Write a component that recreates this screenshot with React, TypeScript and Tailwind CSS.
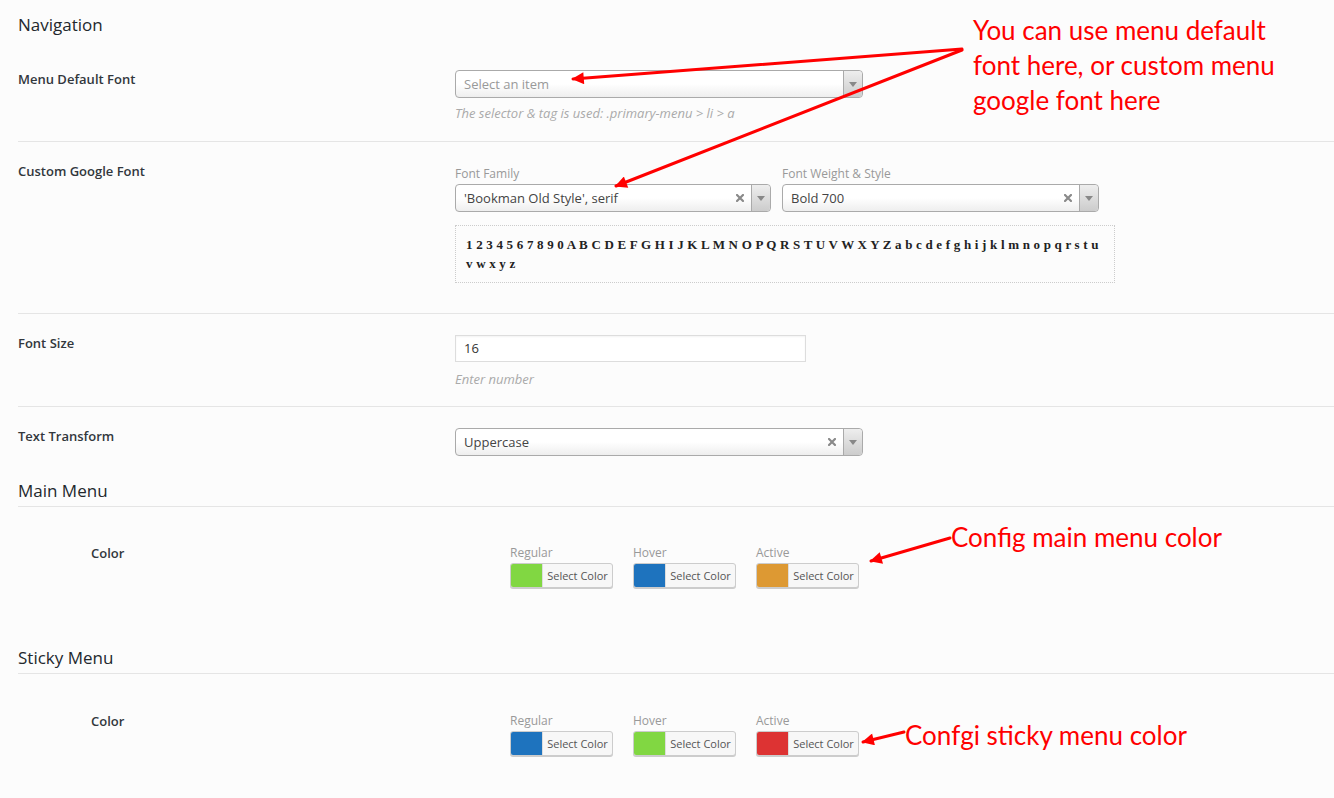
import React from "react";

const ui = "font-['Open_Sans',_'Noto_Sans',_sans-serif]";
const labelCls = "text-[13px] font-semibold leading-[18px] text-[#32373c]";
const helpCls = "text-[13px] italic leading-[16px] text-[#aaa]";
const smallLabel = "text-[12px] leading-[16px] text-[#999]";

function ClearIcon() {
  return (
    <svg width="8" height="8" viewBox="0 0 8 8" aria-hidden>
      <path d="M1 1 L7 7 M7 1 L1 7" stroke="#8a8a8a" strokeWidth="2.2" strokeLinecap="square" />
    </svg>
  );
}

type SelectProps = {
  value?: string;
  placeholder?: string;
  clearable?: boolean;
  className?: string;
};

function Select({ value, placeholder, clearable, className }: SelectProps) {
  return (
    <div
      className={`flex h-[28px] items-stretch rounded-[4px] border border-[#aaa] bg-linear-to-b from-white from-50% to-[#eee] ${className ?? ""}`}
    >
      <span
        className={`flex-1 truncate pl-[8px] text-[13px] leading-[26px] ${value ? "text-[#444]" : "text-[#999]"}`}
      >
        {value ?? placeholder}
      </span>
      {clearable ? (
        <span className="flex w-[22px] items-center justify-center">
          <ClearIcon />
        </span>
      ) : null}
      <span className="flex w-[19px] items-center justify-center rounded-r-[4px] border-l border-[#aaa] bg-linear-to-b from-[#eee] to-[#ccc]">
        <span className="h-0 w-0 border-x-[4px] border-t-[5px] border-x-transparent border-t-[#888]" />
      </span>
    </div>
  );
}

function ColorPick({ label, color }: { label: string; color: string }) {
  return (
    <div className="flex w-[103px] flex-col">
      <span className={`${smallLabel} mb-[2px]`}>{label}</span>
      <button
        type="button"
        className="flex h-[25px] w-[103px] items-stretch overflow-hidden rounded-[3px] border border-[#ccc] bg-[#f7f7f7] p-0 shadow-[0_1px_0_#ccc]"
      >
        <span className="w-[31px] shrink-0" style={{ backgroundColor: color }} />
        <span className="flex-1 border-l border-[#ddd] text-center text-[11px] leading-[23px] text-[#555]">
          Select Color
        </span>
      </button>
    </div>
  );
}

const preview =
  "1 2 3 4 5 6 7 8 9 0 A B C D E F G H I J K L M N O P Q R S T U V W X Y Z a b c d e f g h i j k l m n o p q r s t u v w x y z";

function Annotations() {
  const red = "#ff0000";
  const note = "absolute font-['Lato',_sans-serif] text-[26px] leading-[35px] text-[#ff0000]";
  return (
    <div className="pointer-events-none absolute inset-0">
      <svg className="absolute left-0 top-0" width="1334" height="798" aria-hidden>
        <defs>
          <marker id="ah" viewBox="0 0 10 10" refX="9" refY="5" markerWidth="5" markerHeight="4" orient="auto">
            <path d="M0 0 L10 5 L0 10 Z" fill={red} />
          </marker>
        </defs>
        <g stroke={red} strokeWidth="3" fill="none" strokeLinecap="round">
          <line x1="962" y1="49" x2="573" y2="79" markerEnd="url(#ah)" />
          <line x1="962" y1="50" x2="616" y2="186" markerEnd="url(#ah)" />
          <line x1="950" y1="538" x2="871" y2="561" markerEnd="url(#ah)" />
          <line x1="904" y1="732" x2="863" y2="742" markerEnd="url(#ah)" />
        </g>
      </svg>
      <div className={`${note} left-[973px] top-[13px]`}>
        <div>You can use menu default</div>
        <div>font here, or custom menu</div>
        <div>google font here</div>
      </div>
      <div className={`${note} left-[951px] top-[520px]`}>Config main menu color</div>
      <div className={`${note} left-[905px] top-[718px]`}>Confgi sticky menu color</div>
    </div>
  );
}

export default function App() {
  return (
    <div className={`relative min-h-screen w-[1334px] overflow-hidden bg-[#fcfcfc] pl-[18px] ${ui}`}>
      {/* Navigation */}
      <h2 className="pt-[13px] text-[17px] font-normal leading-[24px] text-[#23282d]">Navigation</h2>

      <div className="grid grid-cols-[437px_1fr] border-b border-[#e5e5e5] pt-[33px] pb-[20px]">
        <div className={labelCls}>Menu Default Font</div>
        <div>
          <Select placeholder="Select an item" className="w-[408px]" />
          <p className={`${helpCls} mt-[7px]`}>The selector &amp; tag is used: .primary-menu &gt; li &gt; a</p>
        </div>
      </div>

      <div className="grid grid-cols-[437px_1fr] border-b border-[#e5e5e5] pt-[20px] pb-[30px]">
        <div className={labelCls}>Custom Google Font</div>
        <div className="pt-[4px]">
          <div className="flex gap-[11px]">
            <div className="flex flex-col">
              <span className={`${smallLabel} mb-[2px]`}>Font Family</span>
              <Select value="'Bookman Old Style', serif" clearable className="w-[316px]" />
            </div>
            <div className="flex flex-col">
              <span className={`${smallLabel} mb-[2px]`}>Font Weight &amp; Style</span>
              <Select value="Bold 700" clearable className="w-[317px]" />
            </div>
          </div>
          <div className="mt-[13px] w-[660px] border border-dotted border-[#ccc] px-[10px] py-[9px] font-['Liberation_Serif',_serif] text-[13px] font-bold leading-[19px] tracking-[0.2px] text-[#222]">
            {preview}
          </div>
        </div>
      </div>

      <div className="grid grid-cols-[437px_1fr] border-b border-[#e5e5e5] pt-[20px] pb-[19px]">
        <div className={labelCls}>Font Size</div>
        <div className="pt-[1px]">
          <div className="h-[27px] w-[351px] border border-[#ddd] bg-white pl-[8px] text-[13px] leading-[25px] text-[#333] shadow-[inset_0_1px_2px_rgba(0,0,0,0.05)]">
            16
          </div>
          <p className={`${helpCls} mt-[9px]`}>Enter number</p>
        </div>
      </div>

      <div className="grid grid-cols-[437px_1fr] pt-[20px]">
        <div className={labelCls}>Text Transform</div>
        <div className="pt-[1px]">
          <Select value="Uppercase" clearable className="w-[408px]" />
        </div>
      </div>

      {/* Main Menu */}
      <h2 className="mt-[24px] border-b border-[#e5e5e5] pb-[4px] text-[17px] leading-[22px] text-[#23282d]">
        Main Menu
      </h2>
      <div className="grid grid-cols-[492px_1fr] pt-[35px] pb-[59px]">
        <div className={`${labelCls} pl-[73px] pt-[2px]`}>Color</div>
        <div className="flex gap-[20px] pt-[3px]">
          <ColorPick label="Regular" color="#81d742" />
          <ColorPick label="Hover" color="#1e73be" />
          <ColorPick label="Active" color="#dd9933" />
        </div>
      </div>

      {/* Sticky Menu */}
      <h2 className="border-b border-[#e5e5e5] pb-[4px] text-[17px] leading-[22px] text-[#23282d]">Sticky Menu</h2>
      <div className="grid grid-cols-[492px_1fr] pt-[36px]">
        <div className={`${labelCls} pl-[73px] pt-[2px]`}>Color</div>
        <div className="flex gap-[20px] pt-[3px]">
          <ColorPick label="Regular" color="#1e73be" />
          <ColorPick label="Hover" color="#81d742" />
          <ColorPick label="Active" color="#dd3333" />
        </div>
      </div>

      <Annotations />
    </div>
  );
}
